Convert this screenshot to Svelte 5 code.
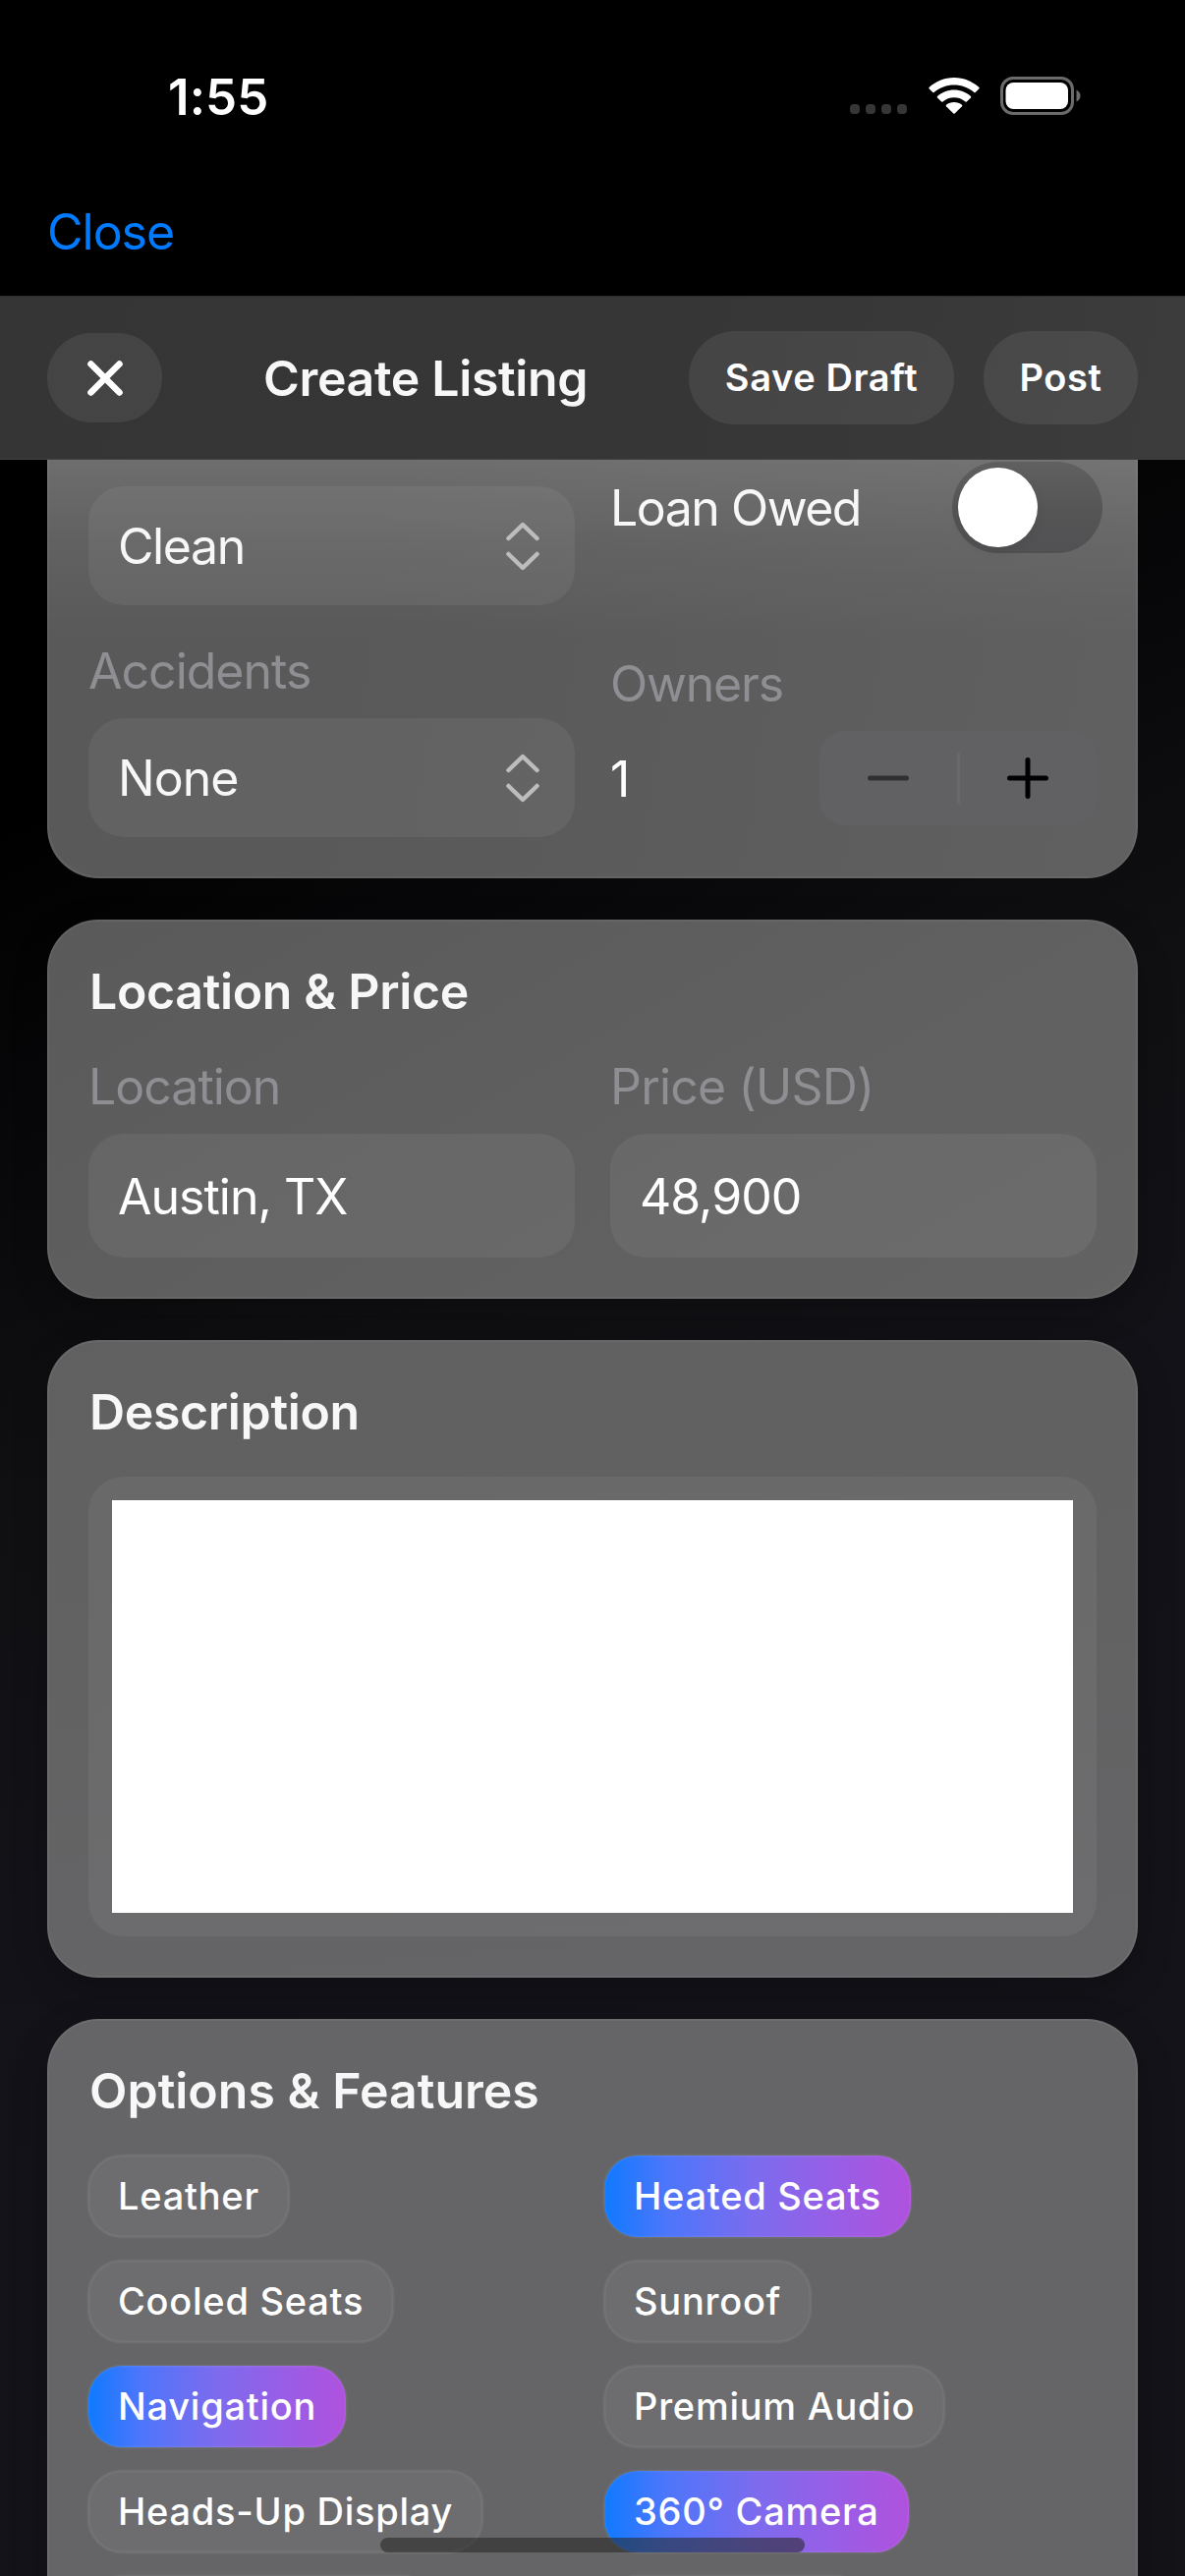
<script>
  const chips = [
    { name: 'Leather' },
    { name: 'Heated Seats', on: true },
    { name: 'Cooled Seats' },
    { name: 'Sunroof' },
    { name: 'Navigation', on: true },
    { name: 'Premium Audio' },
    { name: 'Heads-Up Display' },
    { name: '360° Camera', on: true }
  ];
</script>

{#snippet updown()}
  <svg class="updown" width="34" height="50" viewBox="0 0 34 50">
    <path d="M2.500 17 L17 3 L31.500 17 M2.500 33 L17 47 L31.500 33" />
  </svg>
{/snippet}

<div class="screen">
  <div class="status">
    <span class="time">1:55</span>
    <svg class="dots" width="58" height="10" viewBox="0 0 58 10">
      <rect width="10" height="10" rx="4" /><rect x="16" width="10" height="10" rx="4" />
      <rect x="32" width="10" height="10" rx="4" /><rect x="48" width="10" height="10" rx="4" />
    </svg>
    <svg class="wifi" width="52" height="37" viewBox="0 0 52 37">
      <path d="M26 0 C36 0 45 4 51.500 10 Q52 10.700 51.500 11.300 L47.700 15 Q47 15.600 46.400 15 C40.500 10 33.500 7.500 26 7.500 C18.500 7.500 11.500 10 5.600 15 Q5 15.600 4.300 15 L.5 11.300 Q0 10.700 .5 10 C7 4 16 0 26 0Z" />
      <path d="M26 12.500 C32.500 12.500 38.500 15 43 19 Q43.700 19.700 43 20.400 L38.800 24.500 Q38.200 25 37.500 24.500 C34.300 21.700 30.300 20.200 26 20.200 C21.700 20.200 17.700 21.700 14.500 24.500 Q13.800 25 13.200 24.500 L9 20.400 Q8.300 19.700 9 19 C13.500 15 19.500 12.500 26 12.500Z" />
      <path d="M26 25 C29 25 31.800 26 34 27.800 Q34.800 28.500 34 29.300 L26.700 36.500 Q26 37 25.300 36.500 L18 29.300 Q17.200 28.500 18 27.800 C20.200 26 23 25 26 25Z" />
    </svg>
    <svg class="battery" width="82" height="39" viewBox="0 0 82 39">
      <rect x="1.500" y="1.500" width="72" height="36" rx="11.500" fill="none" stroke="#6b6b6b" stroke-width="3" />
      <rect x="5.500" y="6" width="63.500" height="27" rx="8" fill="#fff" />
      <path d="M77.500 13.500 Q81.500 15.500 81.500 19.500 Q81.500 23.500 77.500 25.500Z" fill="#6b6b6b" />
    </svg>
  </div>
  <div class="modalbar"><span class="close">Close</span></div>

  <header>
    <div class="pill x">
      <svg width="36" height="36" viewBox="0 0 36 36"><path d="M3.500 3.500 L32.500 32.500 M32.500 3.500 L3.500 32.500" /></svg>
    </div>
    <h1>Create Listing</h1>
    <div class="actions">
      <div class="pill save"><span>Save Draft</span></div>
      <div class="pill post"><span>Post</span></div>
    </div>
  </header>

  <main>
    <section class="card first">
      <div class="cols">
        <div class="col">
          <div class="field select"><span class="clean">Clean</span>{@render updown()}</div>
          <div class="label second">Accidents</div>
          <div class="field select"><span>None</span>{@render updown()}</div>
        </div>
        <div class="col">
          <div class="loan"><span>Loan Owed</span><div class="toggle"><div class="knob"></div></div></div>
          <div class="label owners">Owners</div>
          <div class="count">
            <span>1</span>
            <div class="stepper">
              <svg width="42" height="42" viewBox="0 0 42 42"><path d="M2.500 21 H39.500" stroke="#303030" /></svg>
              <i></i>
              <svg width="42" height="42" viewBox="0 0 42 42"><path d="M2.500 21 H39.500 M21 2.500 V39.500" stroke="#000" /></svg>
            </div>
          </div>
        </div>
      </div>
    </section>

    <section class="card price">
      <h2>Location &amp; Price</h2>
      <div class="cols">
        <div class="col">
          <div class="label">Location</div>
          <div class="field input"><span>Austin, TX</span></div>
        </div>
        <div class="col">
          <div class="label usd">Price (USD)</div>
          <div class="field input"><span>48,900</span></div>
        </div>
      </div>
    </section>

    <section class="card description">
      <h2>Description</h2>
      <div class="editor"><div class="paper"></div></div>
    </section>

    <section class="card options">
      <h2 class="features">Options &amp; Features</h2>
      <div class="chips">
        {#each chips as chip}
          <div class="chip" class:on={chip.on}>{chip.name}</div>
        {/each}
        <div class="chip blank-a"></div>
        <div class="chip blank-b"></div>
      </div>
    </section>
  </main>
  <div class="home"></div>
</div>

<style>
  :global(body) { margin: 0; background: #000; }
  .screen {
    position: relative; width: 1206px; height: 2622px; overflow: hidden;
    display: flex; flex-direction: column;
    background: linear-gradient(155deg, #000 0, #000 26%, #08080a 37%, #101012 48%, #131218 62%, #141318 100%);
    color: #f7f7f7;
    font: 400 50px/61px Inter, "Liberation Sans", sans-serif;
    letter-spacing: -1px;
  }
  .screen * { box-sizing: border-box; }
  span, .label, h1, h2, .chip { white-space: nowrap; }
  span { padding-top: 2px; }
  .status {
    height: 180px; flex: none; display: flex; align-items: flex-start;
    padding: 0 0 0 171px; background: #000; color: #fff;
  }
  .time { font-weight: 600; font-size: 51px; letter-spacing: .1px; margin-top: 66px; width: 694px; }
  .dots { margin-top: 106px; fill: #363636; }
  .wifi { margin: 79px 0 0 22px; fill: #fff; }
  .battery { margin: 78px 0 0 21px; }
  .modalbar { height: 121px; flex: none; padding: 26px 48px 0; background: #000; color: #007aff; }
  header {
    height: 167px; flex: none; display: flex; align-items: center; padding: 0 48px;
    background: linear-gradient(100deg, #353535, #363636 60%, #3c3c3d);
    border-top: 1px solid #2c2c2c; border-bottom: 1px solid #414141;
  }
  .pill { display: flex; align-items: center; justify-content: center; background: rgba(255, 255, 255, .08); color: #fff; }
  .pill.x { width: 117px; height: 91px; border-radius: 45px; }
  .x path { stroke: #fff; stroke-width: 6.6; stroke-linecap: round; }
  h1, h2 { margin: 0; font-size: 50px; font-weight: 600; line-height: 61px; letter-spacing: -.35px; }
  h2 { padding: 1px 0 0 1px; height: 61px; }
  .features { letter-spacing: 0; }
  h1 { margin-left: 103px; padding-top: 1px; }
  .actions { margin-left: auto; display: flex; gap: 30px; font-size: 38px; font-weight: 600; line-height: 47px; letter-spacing: .6px; }
  .actions .pill { height: 95px; border-radius: 47px; }
  .actions span { padding-top: 0; }
  .save { width: 270px; }
  .post { width: 157px; }
  main { flex: 1; min-height: 0; overflow: hidden; display: flex; flex-direction: column; gap: 42px; padding: 0 48px; }
  .card {
    flex: none; padding: 42px; border-radius: 52px; display: flex; flex-direction: column; gap: 36px;
    background: linear-gradient(160deg, #5b5b5b, #626263);
    box-shadow: inset 0 0 0 2px rgba(255, 255, 255, .055), 0 12px 36px rgba(0, 0, 0, .22);
  }
  .first {
    height: 426px; padding-top: 27px; border-radius: 0 0 52px 52px;
    background: linear-gradient(rgba(255, 255, 255, .125), rgba(255, 255, 255, .05) 80px, rgba(255, 255, 255, 0) 180px),
      linear-gradient(100deg, #595959 30%, #606060);
    box-shadow: inset 2px -2px 0 rgba(255, 255, 255, .05), inset -2px 0 0 rgba(255, 255, 255, .05);
  }
  .price { background: linear-gradient(150deg, #5a5a5a, #606060 60%, #636364); }
  .description { background: linear-gradient(175deg, #606060, #656567); }
  .options { background: #656567; height: 620px; }
  .cols { display: grid; grid-template-columns: 1fr 1fr; gap: 36px; }
  .col { display: flex; flex-direction: column; min-width: 0; }
  .label { color: #8e8e93; margin-bottom: 18px; height: 61px; padding-top: 1px; }
  .usd { letter-spacing: -.8px; }
  .second { margin-top: 36px; }
  .field { display: flex; align-items: center; border-radius: 36px; background: rgba(255, 255, 255, .06); padding: 0 30px; }
  .select { height: 121px; justify-content: space-between; padding-right: 36px; }
  .clean { letter-spacing: -1.4px; }
  .input { height: 126px; color: #fff; }
  .updown path { fill: none; stroke: #bdbdbd; stroke-width: 4.5; stroke-linecap: round; stroke-linejoin: round; }
  .loan { height: 93px; margin: -25px -6px 0 0; display: flex; align-items: center; justify-content: space-between; letter-spacing: -1.5px; }
  .toggle { width: 153px; height: 93px; border-radius: 47px; padding: 6px; background: linear-gradient(#606061, #555556 55%, #515153); }
  .knob { width: 81px; height: 81px; border-radius: 50%; background: #fff; box-shadow: 0 4px 12px rgba(0, 0, 0, .07); }
  .owners { margin-top: 102px; letter-spacing: -1.2px; }
  .count { height: 96px; display: flex; align-items: center; justify-content: space-between; color: #fff; }
  .stepper { width: 282px; height: 96px; border-radius: 26px; background: #616164; display: flex; align-items: center; justify-content: space-between; padding: 0 49px; }
  .stepper path { fill: none; stroke-width: 5; stroke-linecap: round; }
  .stepper i { width: 3px; height: 54px; background: #68686b; border-radius: 2px; }
  .editor { height: 468px; border-radius: 36px; padding: 24px; background: rgba(255, 255, 255, .055); }
  .paper { height: 420px; background: #fff; }
  .chips { display: grid; grid-template-columns: 1fr 1fr; gap: 24px; justify-items: start; }
  .chip {
    height: 83px; padding: 0 30px; border-radius: 34px; font-size: 38px; font-weight: 550; line-height: 82px;
    letter-spacing: .75px; color: #fff; background: rgba(255, 255, 255, .055);
    box-shadow: 0 0 0 1.5px rgba(255, 255, 255, .06), inset 0 0 0 1.5px rgba(255, 255, 255, .06);
  }
  .on { background: linear-gradient(90deg, #0f7aff, #4c76fb 20%, #7d6bee 50%, #985ee6 75%, #af52de); }
  .blank-a { width: 355px; }
  .blank-b { width: 270px; }
  .home { position: absolute; left: 387px; top: 2583px; width: 432px; height: 15px; border-radius: 8px; background: rgba(40, 40, 40, .58); }
</style>
